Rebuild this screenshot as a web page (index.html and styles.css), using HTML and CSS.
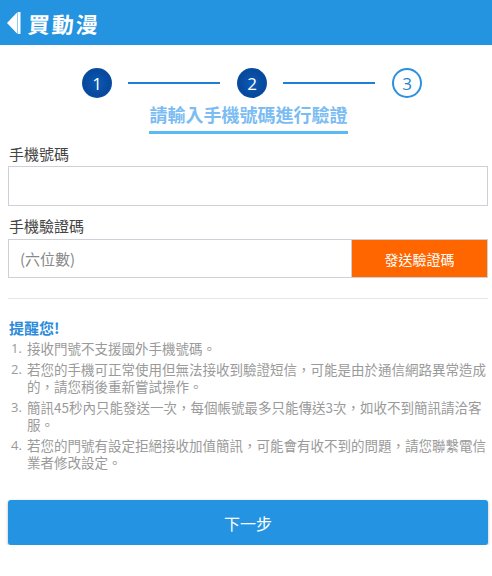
FILE: index.html
```html
<!DOCTYPE html>
<html lang="zh-Hant">
<head>
<meta charset="utf-8">
<title>買動漫</title>
<link rel="stylesheet" href="styles.css">
</head>
<body>
<header class="topbar">
  <svg class="back" width="14" height="24" viewBox="0 0 14 24"><path d="M10.5 1 L0 12 L10.5 23 Z" fill="#fff"/><rect x="11" y="1" width="2.5" height="22" fill="#fff"/></svg>
  <span class="brand">買動漫</span>
</header>
<main class="page">
  <div class="steps">
    <span class="step done">1</span>
    <span class="line"></span>
    <span class="step done">2</span>
    <span class="line"></span>
    <span class="step todo">3</span>
  </div>
  <div class="title-wrap"><h1 class="title">請輸入手機號碼進行驗證</h1></div>

  <label class="label first">手機號碼</label>
  <div class="input"></div>

  <label class="label">手機驗證碼</label>
  <div class="input-row">
    <div class="input code">(六位數)</div>
    <button class="send">發送驗證碼</button>
  </div>

  <hr class="divider">

  <h2 class="notice-title">提醒您!</h2>
  <ol class="notice">
    <li><span class="num">1.</span><span class="txt">接收門號不支援國外手機號碼。</span></li>
    <li><span class="num">2.</span><span class="txt">若您的手機可正常使用但無法接收到驗證短信，可能是由於通信網路異常造成的，請您稍後重新嘗試操作。</span></li>
    <li><span class="num">3.</span><span class="txt">簡訊45秒內只能發送一次，每個帳號最多只能傳送3次，如收不到簡訊請洽客服。</span></li>
    <li><span class="num">4.</span><span class="txt">若您的門號有設定拒絕接收加值簡訊，可能會有收不到的問題，請您聯繫電信業者修改設定。</span></li>
  </ol>

  <button class="next">下一步</button>
</main>
</body>
</html>
```

FILE: styles.css
```css
* { box-sizing: border-box; }
html, body { margin: 0; padding: 0; background: #fff; }
body {
  width: 492px;
  font-family: "Noto Sans CJK TC", "Noto Sans", sans-serif;
  color: #444;
}
.topbar {
  height: 45px;
  background: #2493e0;
  display: flex;
  align-items: center;
  padding-left: 7px;
}
.back { display: block; margin-right: 7px; }
.brand {
  color: #fff;
  font-size: 22px;
  font-weight: 700;
  letter-spacing: 2px;
  line-height: 1;
  transform: skewX(-4deg);
}
.page {
  padding: 0 4px 0 8px;
}
.steps {
  display: flex;
  align-items: center;
  margin: 23px 0 0 74px;
  height: 30px;
}
.step {
  width: 30px;
  height: 30px;
  border-radius: 50%;
  display: flex;
  align-items: center;
  justify-content: center;
  font-family: "Open Sans", "Liberation Sans", sans-serif;
  font-size: 17px;
  flex: none;
}
.step.done {
  color: #fff;
  background: radial-gradient(circle at 50% 50%, #0a5ab5 0%, #07489c 62%, #0b56ad 78%, #2a8de2 100%);
}
.step.todo {
  color: #1d7fd6;
  background: #fff;
  border: 2px solid #2b90e0;
}
.line {
  width: 92px;
  height: 2px;
  background: #1d80d3;
  margin: 0 17px 0 16px;
  flex: none;
}
.title-wrap {
  display: flex;
  justify-content: center;
  margin-top: 4px;
}
.title {
  margin: 0;
  font-size: 18px;
  font-weight: 700;
  color: #7bbcf2;
  line-height: 24px;
  padding: 0 0 5px 1px;
  border-bottom: 3px solid #5bbaf6;
}
.label {
  display: block;
  font-size: 15px;
  line-height: 20px;
  color: #444;
  margin-top: 10px;
  padding-left: 1px;
}
.label.first { margin-top: 10px; }
.input {
  height: 40px;
  border: 1px solid #cdd1d7;
  background: #fff;
  margin-top: 2px;
}
.input-row {
  display: flex;
  margin-top: 3px;
  height: 39px;
}
.input.code {
  flex: 1;
  margin: 0;
  height: 39px;
  border-right: none;
  display: flex;
  align-items: center;
  padding-left: 11px;
  color: #888;
  font-size: 15px;
}
.send {
  width: 137px;
  height: 39px;
  border: 1px solid #cdd1d7;
  background: #ff6600;
  color: #fff;
  font-family: inherit;
  font-size: 14px;
  padding: 0;
  cursor: pointer;
}
.divider {
  border: none;
  border-top: 1px solid #e6e6e6;
  margin: 20px 0 0;
  height: 0;
}
.notice-title {
  margin: 19px 0 0;
  font-size: 15px;
  font-weight: 700;
  color: #2c8bdb;
  line-height: 20px;
  padding-left: 1px;
}
.notice {
  list-style: none;
  margin: 2px 0 0;
  padding: 0;
  color: #9a9a9a;
  font-size: 13.5px;
  line-height: 17px;
}
.notice li {
  display: flex;
  margin-bottom: 4px;
}
.num {
  width: 19px;
  flex: none;
  padding-left: 3px;
  font-family: "Open Sans", "Liberation Sans", sans-serif;
  font-size: 13px;
}
.txt { flex: 1; }
.next {
  display: block;
  width: 100%;
  height: 45px;
  margin-top: 29px;
  border: none;
  border-radius: 3px;
  background: #2494e2;
  color: #fff;
  font-family: inherit;
  font-size: 16px;
  box-shadow: 0 1px 3px rgba(0,0,0,0.3);
}
```
